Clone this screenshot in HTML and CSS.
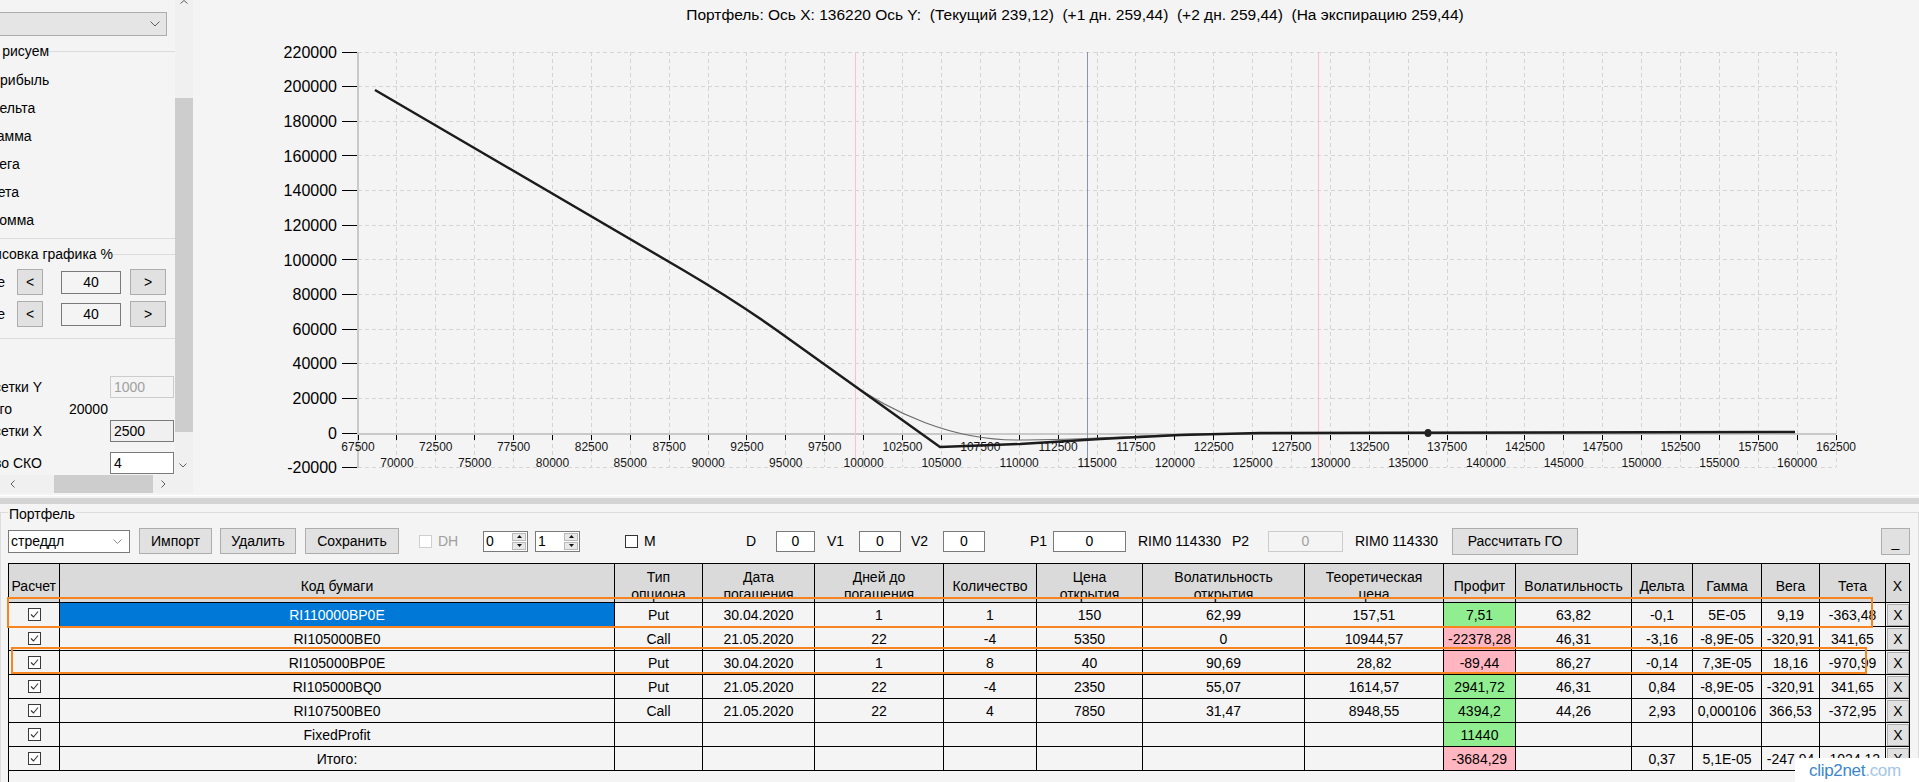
FILE: index.html
```html
<!DOCTYPE html>
<html lang="ru">
<head>
<meta charset="utf-8">
<title>Портфель</title>
<link rel="stylesheet" href="styles.css">
</head>
<body>
<div class="app">
  <div class="top">
    <aside class="side">
      <div class="side-main">
        <div class="side-view">
          <div class="side-content">
            <div class="combo-gray"><svg class="chev" width="10" height="6" viewBox="0 0 10 6"><polyline points="0.5,0.5 5,5 9.5,0.5"/></svg></div>
            <fieldset class="grp grp1">
              <legend>Что рисуем</legend>
              <div class="radios">
                <label class="radio"><span class="dot"></span>Прибыль</label>
                <label class="radio"><span class="dot"></span>Дельта</label>
                <label class="radio"><span class="dot"></span>Гамма</label>
                <label class="radio"><span class="dot"></span>Вега</label>
                <label class="radio"><span class="dot"></span>Тета</label>
                <label class="radio"><span class="dot"></span>Вомма</label>
              </div>
            </fieldset>
            <fieldset class="grp grp2">
              <legend>Отрисовка графика %</legend>
              <div class="zooms">
                <div class="zrow"><span class="zlbl">По ширине</span><button class="btn zl">&lt;</button><div class="zval">40</div><button class="btn zr">&gt;</button></div>
                <div class="zrow"><span class="zlbl">По высоте</span><button class="btn zl">&lt;</button><div class="zval">40</div><button class="btn zr">&gt;</button></div>
              </div>
            </fieldset>
            <div class="frow fa"><span class="flbl">Шаг сетки Y</span><div class="tb dis">1000</div></div>
            <div class="frow fb"><span class="flbl">Итого</span><span class="fval">20000</span></div>
            <div class="frow fc"><span class="flbl">Шаг сетки X</span><div class="tb ro">2500</div></div>
            <div class="frow fd"><span class="flbl">Кол-во СКО</span><div class="tb">4</div></div>
          </div>
        </div>
        <div class="vscroll">
          <div class="sb-up"><svg class="arr" width="8" height="4" viewBox="0 0 8 4"><polyline points="0.5,3.5 4,0.5 7.5,3.5"/></svg></div>
          <div class="sb-gap1"></div>
          <div class="sb-thumb"></div>
          <div class="sb-gap2"></div>
          <div class="sb-down"><svg class="arr" width="8" height="5" viewBox="0 0 8 5"><polyline points="0.5,0.5 4,4 7.5,0.5"/></svg></div>
        </div>
      </div>
      <div class="hscroll-row">
        <div class="hscroll">
          <div class="sb-left"><svg class="arr" width="5" height="8" viewBox="0 0 5 8"><polyline points="4.5,0.5 1,4 4.5,7.5"/></svg></div>
          <div class="sb-htrack"><div class="sb-hthumb"></div></div>
          <div class="sb-right"><svg class="arr" width="5" height="8" viewBox="0 0 5 8"><polyline points="0.5,0.5 4,4 0.5,7.5"/></svg></div>
        </div>
        <div class="sb-corner"></div>
      </div>
    </aside>

    <section class="chart">
      <div class="chart-title">Портфель: Ось X: 136220 Ось Y:  (Текущий 239,12)  (+1 дн. 259,44)  (+2 дн. 259,44)  (На экспирацию 259,44)</div>
      <svg class="plot" width="1726" height="465" viewBox="0 30 1726 465">
        <path class="gridl" d="M165 52.5H1643M165 86.5H1643M165 121.5H1643M165 155.5H1643M165 190.5H1643M165 225.5H1643M165 259.5H1643M165 294.5H1643M165 329.5H1643M165 363.5H1643M165 398.5H1643M165 467.5H1643"/>
        <path class="gridl" d="M203.5 52V467M242.5 52V467M281.5 52V467M320.5 52V467M359.5 52V467M398.5 52V467M437.5 52V467M476.5 52V467M515.5 52V467M553.5 52V467M592.5 52V467M631.5 52V467M670.5 52V467M709.5 52V467M748.5 52V467M787.5 52V467M826.5 52V467M865.5 52V467M904.5 52V467M942.5 52V467M981.5 52V467M1020.5 52V467M1059.5 52V467M1098.5 52V467M1137.5 52V467M1176.5 52V467M1215.5 52V467M1254.5 52V467M1293.5 52V467M1331.5 52V467M1370.5 52V467M1409.5 52V467M1448.5 52V467M1487.5 52V467M1526.5 52V467M1565.5 52V467M1604.5 52V467M1643.5 52V467"/>
        <path class="axis" d="M165 52V468M164 434H1643"/>
        <path class="ticks" d="M149 52.5H164M149 86.5H164M149 121.5H164M149 155.5H164M149 190.5H164M149 225.5H164M149 259.5H164M149 294.5H164M149 329.5H164M149 363.5H164M149 398.5H164M149 433.5H164M149 467.5H164"/>
        <path class="ticks" d="M165.5 435V440M203.5 435V440M242.5 435V440M281.5 435V440M320.5 435V440M359.5 435V440M398.5 435V440M437.5 435V440M476.5 435V440M515.5 435V440M553.5 435V440M592.5 435V440M631.5 435V440M670.5 435V440M709.5 435V440M748.5 435V440M787.5 435V440M826.5 435V440M865.5 435V440M904.5 435V440M942.5 435V440M981.5 435V440M1020.5 435V440M1059.5 435V440M1098.5 435V440M1137.5 435V440M1176.5 435V440M1215.5 435V440M1254.5 435V440M1293.5 435V440M1331.5 435V440M1370.5 435V440M1409.5 435V440M1448.5 435V440M1487.5 435V440M1526.5 435V440M1565.5 435V440M1604.5 435V440M1643.5 435V440"/>
        <line class="vl pink" x1="662.5" y1="52" x2="662.5" y2="467"/>
        <line class="vl pink" x1="1125.5" y1="52" x2="1125.5" y2="467"/>
        <line class="vl blue" x1="894.5" y1="52" x2="894.5" y2="467"/>
        <path class="cur" d="M182,90 L490,270 Q541,300 582,329 L650,378 C700,414 760,440 823,440 C885,440 940,436 1000,434 L1602,432"/>
        <path class="exp" d="M182,90 L490,270 Q541,300 582,329 L747,447 L827,444 L907,439 L987,435 L1067,433 L1602,432"/>
        <ellipse class="mark" cx="1235" cy="433" rx="3.5" ry="4"/>
        <g class="ylab">
          <text x="144" y="57.7">220000</text>
          <text x="144" y="92.3">200000</text>
          <text x="144" y="127">180000</text>
          <text x="144" y="161.6">160000</text>
          <text x="144" y="196.2">140000</text>
          <text x="144" y="230.9">120000</text>
          <text x="144" y="265.5">100000</text>
          <text x="144" y="300.2">80000</text>
          <text x="144" y="334.8">60000</text>
          <text x="144" y="369.4">40000</text>
          <text x="144" y="404.1">20000</text>
          <text x="144" y="438.7">0</text>
          <text x="144" y="473.3">-20000</text>
        </g>
        <g class="xlab">
          <text x="165" y="451.3">67500</text>
          <text x="242.8" y="451.3">72500</text>
          <text x="320.6" y="451.3">77500</text>
          <text x="398.4" y="451.3">82500</text>
          <text x="476.2" y="451.3">87500</text>
          <text x="553.9" y="451.3">92500</text>
          <text x="631.7" y="451.3">97500</text>
          <text x="709.5" y="451.3">102500</text>
          <text x="787.3" y="451.3">107500</text>
          <text x="865.1" y="451.3">112500</text>
          <text x="942.9" y="451.3">117500</text>
          <text x="1020.7" y="451.3">122500</text>
          <text x="1098.5" y="451.3">127500</text>
          <text x="1176.3" y="451.3">132500</text>
          <text x="1254.1" y="451.3">137500</text>
          <text x="1331.9" y="451.3">142500</text>
          <text x="1409.6" y="451.3">147500</text>
          <text x="1487.4" y="451.3">152500</text>
          <text x="1565.2" y="451.3">157500</text>
          <text x="1643" y="451.3">162500</text>
          <text x="203.9" y="467.3">70000</text>
          <text x="281.7" y="467.3">75000</text>
          <text x="359.5" y="467.3">80000</text>
          <text x="437.3" y="467.3">85000</text>
          <text x="515.1" y="467.3">90000</text>
          <text x="592.8" y="467.3">95000</text>
          <text x="670.6" y="467.3">100000</text>
          <text x="748.4" y="467.3">105000</text>
          <text x="826.2" y="467.3">110000</text>
          <text x="904" y="467.3">115000</text>
          <text x="981.8" y="467.3">120000</text>
          <text x="1059.6" y="467.3">125000</text>
          <text x="1137.4" y="467.3">130000</text>
          <text x="1215.2" y="467.3">135000</text>
          <text x="1293" y="467.3">140000</text>
          <text x="1370.7" y="467.3">145000</text>
          <text x="1448.5" y="467.3">150000</text>
          <text x="1526.3" y="467.3">155000</text>
          <text x="1604.1" y="467.3">160000</text>
        </g>
      </svg>
    </section>
  </div>

  <div class="splitter"></div>

  <fieldset class="portfolio">
    <legend>Портфель</legend>
    <div class="toolbar">
      <div class="combo-w"><span>стреддл</span><svg class="chev" width="9" height="5" viewBox="0 0 9 5"><polyline points="0.5,0.5 4.5,4.5 8.5,0.5"/></svg></div>
      <button class="btn b-imp">Импорт</button>
      <button class="btn b-del">Удалить</button>
      <button class="btn b-save">Сохранить</button>
      <label class="chk c-dh"><span class="box"></span>DH</label>
      <div class="nud n0"><span class="v">0</span><span class="spin"><i><svg width="5" height="3" viewBox="0 0 5 3"><polygon points="0,3 2.5,0 5,3"/></svg></i><i><svg width="5" height="3" viewBox="0 0 5 3"><polygon points="0,0 2.5,3 5,0"/></svg></i></span></div>
      <div class="nud n1"><span class="v">1</span><span class="spin"><i><svg width="5" height="3" viewBox="0 0 5 3"><polygon points="0,3 2.5,0 5,3"/></svg></i><i><svg width="5" height="3" viewBox="0 0 5 3"><polygon points="0,0 2.5,3 5,0"/></svg></i></span></div>
      <label class="chk c-m"><span class="box"></span>M</label>
      <span class="lab l-d">D</span><div class="fld f-d">0</div>
      <span class="lab l-v1">V1</span><div class="fld f-v1">0</div>
      <span class="lab l-v2">V2</span><div class="fld f-v2">0</div>
      <span class="lab l-p1">P1</span><div class="fld f-p1">0</div>
      <span class="lab l-rim">RIM0 114330</span>
      <span class="lab l-p2">P2</span><div class="fld dis f-p2">0</div>
      <span class="lab l-rim2">RIM0 114330</span>
      <button class="btn b-go">Рассчитать ГО</button>
      <button class="btn b-min">_</button>
    </div>

    <div class="grid">
      <div class="gr head">
        <div class="c c-calc">Расчет</div>
        <div class="c">Код бумаги</div>
        <div class="c">Тип<br>опциона</div>
        <div class="c">Дата<br>погашения</div>
        <div class="c">Дней до<br>погашения</div>
        <div class="c">Количество</div>
        <div class="c">Цена<br>открытия</div>
        <div class="c">Волатильность<br>открытия</div>
        <div class="c">Теоретическая<br>цена</div>
        <div class="c">Профит</div>
        <div class="c">Волатильность</div>
        <div class="c">Дельта</div>
        <div class="c">Гамма</div>
        <div class="c">Вега</div>
        <div class="c">Тета</div>
        <div class="c">X</div>
      </div>
      <div class="gr">
        <div class="c"><span class="cb"><svg width="11" height="11" viewBox="0 0 11 11"><polyline points="2,5.5 4.5,8 9,2.5"/></svg></span></div>
        <div class="c sel">RI110000BP0E</div>
        <div class="c">Put</div>
        <div class="c">30.04.2020</div>
        <div class="c">1</div>
        <div class="c">1</div>
        <div class="c">150</div>
        <div class="c">62,99</div>
        <div class="c">157,51</div>
        <div class="c pg">7,51</div>
        <div class="c">63,82</div>
        <div class="c">-0,1</div>
        <div class="c">5E-05</div>
        <div class="c">9,19</div>
        <div class="c">-363,48</div>
        <div class="c cx"><span class="xb">X</span></div>
      </div>
      <div class="gr">
        <div class="c"><span class="cb"><svg width="11" height="11" viewBox="0 0 11 11"><polyline points="2,5.5 4.5,8 9,2.5"/></svg></span></div>
        <div class="c">RI105000BE0</div>
        <div class="c">Call</div>
        <div class="c">21.05.2020</div>
        <div class="c">22</div>
        <div class="c">-4</div>
        <div class="c">5350</div>
        <div class="c">0</div>
        <div class="c">10944,57</div>
        <div class="c pr">-22378,28</div>
        <div class="c">46,31</div>
        <div class="c">-3,16</div>
        <div class="c">-8,9E-05</div>
        <div class="c">-320,91</div>
        <div class="c">341,65</div>
        <div class="c cx"><span class="xb">X</span></div>
      </div>
      <div class="gr">
        <div class="c"><span class="cb"><svg width="11" height="11" viewBox="0 0 11 11"><polyline points="2,5.5 4.5,8 9,2.5"/></svg></span></div>
        <div class="c">RI105000BP0E</div>
        <div class="c">Put</div>
        <div class="c">30.04.2020</div>
        <div class="c">1</div>
        <div class="c">8</div>
        <div class="c">40</div>
        <div class="c">90,69</div>
        <div class="c">28,82</div>
        <div class="c pr">-89,44</div>
        <div class="c">86,27</div>
        <div class="c">-0,14</div>
        <div class="c">7,3E-05</div>
        <div class="c">18,16</div>
        <div class="c">-970,99</div>
        <div class="c cx"><span class="xb">X</span></div>
      </div>
      <div class="gr">
        <div class="c"><span class="cb"><svg width="11" height="11" viewBox="0 0 11 11"><polyline points="2,5.5 4.5,8 9,2.5"/></svg></span></div>
        <div class="c">RI105000BQ0</div>
        <div class="c">Put</div>
        <div class="c">21.05.2020</div>
        <div class="c">22</div>
        <div class="c">-4</div>
        <div class="c">2350</div>
        <div class="c">55,07</div>
        <div class="c">1614,57</div>
        <div class="c pg">2941,72</div>
        <div class="c">46,31</div>
        <div class="c">0,84</div>
        <div class="c">-8,9E-05</div>
        <div class="c">-320,91</div>
        <div class="c">341,65</div>
        <div class="c cx"><span class="xb">X</span></div>
      </div>
      <div class="gr">
        <div class="c"><span class="cb"><svg width="11" height="11" viewBox="0 0 11 11"><polyline points="2,5.5 4.5,8 9,2.5"/></svg></span></div>
        <div class="c">RI107500BE0</div>
        <div class="c">Call</div>
        <div class="c">21.05.2020</div>
        <div class="c">22</div>
        <div class="c">4</div>
        <div class="c">7850</div>
        <div class="c">31,47</div>
        <div class="c">8948,55</div>
        <div class="c pg">4394,2</div>
        <div class="c">44,26</div>
        <div class="c">2,93</div>
        <div class="c">0,000106</div>
        <div class="c">366,53</div>
        <div class="c">-372,95</div>
        <div class="c cx"><span class="xb">X</span></div>
      </div>
      <div class="gr">
        <div class="c"><span class="cb"><svg width="11" height="11" viewBox="0 0 11 11"><polyline points="2,5.5 4.5,8 9,2.5"/></svg></span></div>
        <div class="c">FixedProfit</div>
        <div class="c"></div>
        <div class="c"></div>
        <div class="c"></div>
        <div class="c"></div>
        <div class="c"></div>
        <div class="c"></div>
        <div class="c"></div>
        <div class="c pg">11440</div>
        <div class="c"></div>
        <div class="c"></div>
        <div class="c"></div>
        <div class="c"></div>
        <div class="c"></div>
        <div class="c cx"><span class="xb">X</span></div>
      </div>
      <div class="gr">
        <div class="c"><span class="cb"><svg width="11" height="11" viewBox="0 0 11 11"><polyline points="2,5.5 4.5,8 9,2.5"/></svg></span></div>
        <div class="c">Итого:</div>
        <div class="c"></div>
        <div class="c"></div>
        <div class="c"></div>
        <div class="c"></div>
        <div class="c"></div>
        <div class="c"></div>
        <div class="c"></div>
        <div class="c pr">-3684,29</div>
        <div class="c"></div>
        <div class="c">0,37</div>
        <div class="c">5,1E-05</div>
        <div class="c">-247,94</div>
        <div class="c">-1024,12</div>
        <div class="c cx"><span class="xb">X</span></div>
      </div>
    </div>
  </fieldset>
</div>

<div class="annot a1"></div>
<div class="annot a2"></div>
<div class="wm">clip2net<b>.com</b></div>
</body>
</html>
```
FILE: styles.css
```css
* { box-sizing: border-box; }
html, body { margin: 0; padding: 0; }
body {
  width: 1919px; height: 782px; overflow: hidden; position: relative;
  background: #f4f4f4; color: #000;
  font-family: "Liberation Sans", Arial, sans-serif; font-size: 14px;
}
button { font: inherit; color: inherit; margin: 0; padding: 0; }

.app { display: flex; flex-direction: column; height: 782px; }
.top { display: flex; height: 495px; flex: none; }

/* ---------- left settings panel ---------- */
.side { width: 193px; flex: none; display: flex; flex-direction: column; }
.side-main { display: flex; height: 475px; flex: none; }
.side-view { width: 175px; overflow: hidden; flex: none; }
.side-content { margin-left: -110px; width: 300px; }

.combo-gray {
  margin: 12px 0 0 60px; width: 217px; height: 24px;
  background: #e5e5e5; border: 1px solid #adadad;
  display: flex; align-items: center; justify-content: flex-end; padding-right: 6px;
}
.chev, .arr { fill: none; stroke: #5f5f5f; stroke-width: 1; }

.grp { margin: 7px 0 0 30px; width: 270px; border: 1px solid #dcdcdc; padding: 0; min-width: 0; }
.grp legend { padding: 0; line-height: 16px; height: 16px; white-space: nowrap; }
.grp1 legend { margin-left: 54px; }
.grp2 legend { margin-left: 48px; }

.radios { padding: 7px 0 4px 0; }
.radio { display: flex; align-items: center; gap: 5px; height: 28px; padding-left: 51px; white-space: nowrap; }
.dot { width: 13px; height: 13px; border: 1px solid #333; border-radius: 50%; background: #fff; flex: none; }

.zooms { padding: 7px 0 11px 0; }
.zrow { display: flex; align-items: center; height: 26px; }
.zrow + .zrow { margin-top: 6px; }
.zlbl { width: 84px; text-align: right; white-space: nowrap; flex: none; }
.btn {
  background: #e1e1e1; border: 1px solid #adadad; height: 26px;
  display: flex; align-items: center; justify-content: center; flex: none; white-space: nowrap;
}
.zl { width: 26px; margin-left: 12px; }
.zval {
  width: 60px; height: 23px; margin-left: 18px; border: 1px solid #7a7a7a; background: #f4f4f4;
  display: flex; align-items: center; justify-content: center; flex: none;
}
.zr { width: 36px; margin-left: 9px; }

.frow { display: flex; align-items: center; margin-left: 31px; white-space: nowrap; height: 22px; }
.flbl { width: 121px; text-align: right; flex: none; }
.fb .flbl { width: 91px; }
.fval { margin-left: 57px; }
.fa { margin-top: 37px; }
.fd { margin-top: 10px; }
.tb {
  margin-left: 68px; width: 64px; height: 100%; flex: none;
  border: 1px solid #7a7a7a; background: #fff; padding-left: 3px;
  display: flex; align-items: center;
}
.tb.dis { border-color: #cccccc; color: #a0a0a0; background: #f4f4f4; }
.tb.ro { background: #f0f0f0; }

.vscroll { width: 18px; flex: none; display: flex; flex-direction: column; background: #f0f0f0; }
.sb-up { height: 10px; display: flex; justify-content: center; align-items: flex-start; }
.sb-gap1 { height: 88px; }
.sb-thumb { height: 334px; background: #cdcdcd; }
.sb-gap2 { height: 24px; }
.sb-down { height: 19px; display: flex; justify-content: center; align-items: center; padding-right: 3px; }

.hscroll-row { display: flex; height: 18px; flex: none; }
.hscroll { width: 175px; display: flex; background: #f0f0f0; }
.sb-left { width: 18px; display: flex; align-items: center; justify-content: flex-end; padding-right: 3px; }
.sb-htrack { flex: 1; display: flex; }
.sb-hthumb { width: 99px; margin-left: 36px; background: #cdcdcd; }
.sb-right { width: 18px; display: flex; align-items: center; padding-left: 4px; }
.sb-corner { width: 18px; background: #f0f0f0; }

/* ---------- chart ---------- */
.chart { flex: 1; min-width: 0; display: flex; flex-direction: column; }
.chart-title {
  height: 30px; line-height: 30px; text-align: center; white-space: pre;
  font-size: 15.5px; padding-left: 38px;
}
.plot { display: block; }
.gridl { fill: none; stroke: #d4d4d4; stroke-width: 1; stroke-dasharray: 4 3; shape-rendering: crispEdges; }
.axis { fill: none; stroke: #c9c9c9; stroke-width: 2; shape-rendering: crispEdges; }
.ticks { fill: none; stroke: #000; stroke-width: 1; shape-rendering: crispEdges; }
.vl { stroke-width: 1; shape-rendering: crispEdges; }
.pink { stroke: #ffc0cb; }
.blue { stroke: #8497b2; }
.exp { fill: none; stroke: #1c1c1c; stroke-width: 2.4; stroke-linejoin: round; }
.cur { fill: none; stroke: #6b6b6b; stroke-width: 1.2; }
.mark { fill: #222; }
.ylab text { font-family: "Liberation Sans", Arial, sans-serif; font-size: 16px; text-anchor: end; fill: #000; }
.xlab text { font-family: "Liberation Sans", Arial, sans-serif; font-size: 12px; text-anchor: middle; fill: #151515; }

/* ---------- splitter ---------- */
.splitter {
  height: 9px; flex: none; border-top: 1px solid #ffffff;
  background: linear-gradient(#f4f4f4 0 2px, #d4d4d4 2px 8px, #f4f4f4 8px);
}

/* ---------- portfolio group ---------- */
.portfolio { margin: 0; padding: 0; border: 1px solid #dcdcdc; height: 320px; flex: none; min-width: 0; }
.portfolio > legend { margin-left: 7px; padding: 3px 1px 0; line-height: 14px; }

.toolbar { display: flex; align-items: center; height: 28px; margin-top: 6px; white-space: nowrap; }
.combo-w {
  margin-left: 7px; width: 122px; height: 23px; flex: none;
  background: #fff; border: 1px solid #7a7a7a;
  display: flex; align-items: center; justify-content: space-between; padding: 0 7px 0 2px;
}
.combo-w .chev { stroke: #8a8a8a; }
.b-imp { margin-left: 9px; width: 73px; }
.b-del { margin-left: 8px; width: 76px; }
.b-save { margin-left: 9px; width: 94px; }

.chk { display: flex; align-items: center; flex: none; }
.chk .box { width: 13px; height: 13px; border: 1px solid #333; background: #fff; margin-right: 6px; flex: none; }
.c-dh { margin-left: 20px; width: 40px; color: #a0a0a0; }
.c-dh .box { border-color: #cfcfcf; }
.c-m { margin-left: 45px; width: 31px; }

.nud {
  width: 45px; height: 21px; flex: none; border: 1px solid #7a7a7a; background: #fff;
  display: flex; justify-content: space-between;
}
.n0 { margin-left: 24px; }
.n1 { margin-left: 7px; }
.nud .v { padding-left: 2px; line-height: 19px; }
.spin { width: 16px; display: flex; flex-direction: column; gap: 1px; padding: 1px; }
.spin i {
  flex: 1; background: #e8e8e8; border: 1px solid #b9b9b9;
  display: flex; align-items: center; justify-content: center;
}
.spin svg { fill: #111; display: block; }

.lab { flex: none; }
.fld {
  height: 21px; flex: none; border: 1px solid #7a7a7a; background: #fff;
  display: flex; align-items: center; justify-content: center;
}
.fld.dis { border-color: #cccccc; color: #a0a0a0; background: #f4f4f4; }
.l-d { margin-left: 90px; width: 10px; }
.f-d { margin-left: 20px; width: 39px; }
.l-v1 { margin-left: 12px; width: 17px; }
.f-v1 { margin-left: 15px; width: 42px; }
.l-v2 { margin-left: 10px; width: 17px; }
.f-v2 { margin-left: 15px; width: 42px; }
.l-p1 { margin-left: 45px; width: 17px; }
.f-p1 { margin-left: 6px; width: 73px; }
.l-rim { margin-left: 12px; width: 84px; }
.l-p2 { margin-left: 10px; width: 18px; }
.f-p2 { margin-left: 18px; width: 75px; }
.l-rim2 { margin-left: 12px; width: 84px; }
.b-go { margin-left: 13px; width: 126px; height: 27px; }
.b-min { margin-left: 303px; width: 29px; height: 27px; align-items: flex-end; padding-bottom: 4px; }

/* ---------- data grid ---------- */
.grid {
  margin: 8px 0 0 7px; width: 1902px; height: 240px;
  border: 1px solid #000; border-bottom: 0; background: #f4f4f4;
}
.gr {
  display: grid; height: 24px;
  grid-template-columns: 51px 555px 88px 112px 129px 93px 106px 162px 139px 72px 116px 61px 69px 58px 66px 23px;
}
.gr.head { height: 39px; }
.c {
  border-right: 1px solid #000; border-bottom: 1px solid #000;
  display: flex; align-items: center; justify-content: center;
  white-space: nowrap; overflow: hidden; background: #f4f4f4;
}
.c:last-child { border-right: 0; }
.head .c { background: #dadada; padding-top: 6px; line-height: 17px; text-align: center; }
.head .c-calc { justify-content: flex-end; padding-right: 3px; }
.sel { background: #0078d7; color: #fff; }
.pg { background: #90ee90; }
.pr { background: #ffb6c1; }
.cb { width: 13px; height: 13px; border: 1px solid #3a3a3a; background: #fff; display: block; }
.cb svg { display: block; margin: 0; fill: none; stroke: #333; stroke-width: 1.1; }
.cx { justify-content: flex-end; }
.xb {
  width: 22px; height: 22px; border: 1px solid #adadad; background: #e1e1e1;
  display: flex; align-items: center; justify-content: center;
}

/* ---------- overlays ---------- */
.annot { position: absolute; border: 2px solid #f7841e; pointer-events: none; }
.a1 { left: 7px; top: 597px; width: 1866px; height: 31px; }
.a2 { left: 11px; top: 647px; width: 1856px; height: 27px; }
.wm {
  position: absolute; right: 0; bottom: 0; width: 124px; height: 24px;
  background: #fff; padding-left: 14px; font-size: 17px; line-height: 26px;
  color: #3b87c9; letter-spacing: -0.3px;
}
.wm b { font-weight: normal; color: #a4c6e6; }
```
